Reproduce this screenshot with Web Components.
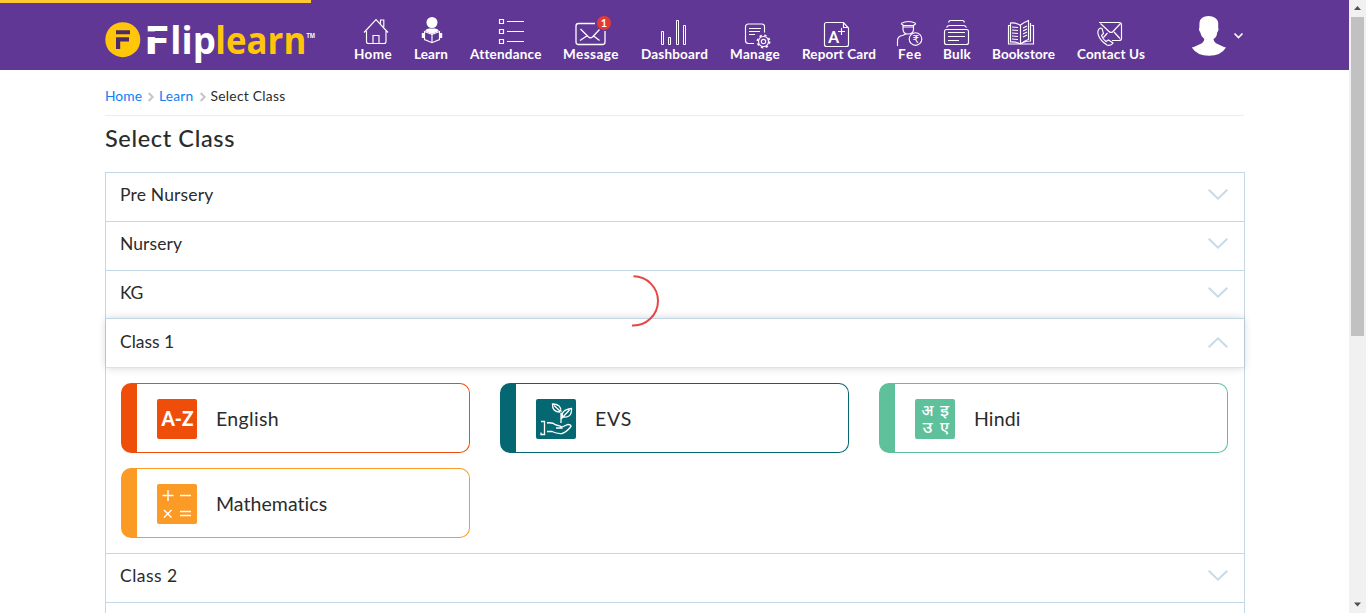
<!DOCTYPE html>
<html lang="en"><head><meta charset="utf-8"><title>Fliplearn</title>
<style>
html,body{margin:0;height:100%;overflow:hidden;background:#fff}
body{font-family:Lato,"Open Sans",sans-serif;color:#2b2b2b}
</style></head><body>
<fl-app></fl-app>
<script>
const make=(name,html,init)=>customElements.define(name,class extends HTMLElement{
  connectedCallback(){ if(this.shadowRoot)return; const r=this.attachShadow({mode:'open'});
    r.innerHTML=typeof html==='function'?html(this):html; if(init)init(this,r); }
});

/* One line of text tracked to a given width */
make('fl-text','<style>:host{display:block;white-space:nowrap}span{display:inline-block}</style><span><slot></slot></span>',(el,r)=>{
  const w=+el.getAttribute('w'), s=r.querySelector('span');
  el.style.width=w+'px';
  s.style.letterSpacing=((w-s.getBoundingClientRect().width)/el.textContent.length)+'px';
});

make('fl-logo',`<style>:host{display:block;width:212px;height:70px}svg{display:block}</style>
<svg width="212" height="70" viewBox="104 0 212 70" font-family="Open Sans" font-weight="700">
<circle cx="122.800" cy="39.7" r="17.500" fill="#ffc60a"/>
<path d="M116 30.3h14v4h-14zM116 37.2h13v4.2h-8.8v7.6H116z" fill="#4b2a6b"/>
<text x="143.500" y="53.700" font-size="39" fill="#fff" textLength="26" lengthAdjust="spacingAndGlyphs">F</text>
<path d="M144 31.4h26v5.600h-26z" fill="#613795"/>
<text x="170.300" y="53.500" font-size="37" fill="#fff" textLength="45.500" lengthAdjust="spacingAndGlyphs">lip</text>
<text x="215.300" y="53.500" font-size="37" fill="#ffc60a" textLength="91" lengthAdjust="spacingAndGlyphs">learn</text>
<text x="306.500" y="37.500" font-size="7" fill="#fff" textLength="8.500" lengthAdjust="spacingAndGlyphs">TM</text>
</svg>`);

/* Icon drawings share the header's coordinate space */
const icons={
home:'<path d="M364 32.500 376 19.500 388 32.500M366.500 31v10.500q0 2 2 2h15.500q2 0 2-2V31M373 43.500v-8h6v8M380.500 23.500v-3.500h3.300v7"/>',
learn:'<circle cx="432" cy="22.500" r="5.500" fill="#fff" stroke="none"/><path d="M425 31q1-2.500 4-2.500h6q3 0 4 2.500l-7 3z" fill="#fff" stroke="none"/><path d="M424.500 31.500 432 34.500l7.500-3v8l-7.500 3.200-7.500-3.200zM432 34.500v8"/><path d="M423.300 33v5M440.700 33v5" stroke-width="3"/>',
attendance:'<path d="M499.500 19.500h4v4h-4zM499.500 29.500h4v4h-4zM499.500 39.500h4v4h-4zM507 21.500h17M507 31.500h17M507 41.500h17"/>',
message:'<path d="M595 23.500h-16.500q-2.500 0-2.500 2.500v16q0 2.500 2.500 2.500h24q2.500 0 2.500-2.500V31M580.500 29l8 8q2 1.500 4 0l7-7.500M580 40.500l7.500-5M599.500 40.500l-6.500-5" stroke-width="1.300"/>',
dashboard:'<path d="M661.500 31.500h2v13h-2zM668.500 37.500h2v7h-2zM676.500 20.500h2v24h-2zM683.500 25.500h2v19h-2z" stroke-width="1"/>',
manage:'<path d="M754 43.500h-5.500q-3 0-3-3v-13.500q0-3 3-3h13.500q2.500 0 2.500 2.500v6M749 28.500h12M749 31.500h11M749 34.500h6"/><circle cx="763.500" cy="41.500" r="2.200"/><circle cx="763.500" cy="41.500" r="5"/><circle cx="763.500" cy="41.500" r="6.200" stroke-dasharray="2.400 2.470" stroke-width="1.500"/>',
report:'<path d="M843.500 22.500h-17q-2 0-2 2v20q0 2 2 2h20q2 0 2-2v-16.500zM843.500 22.500v5h5M841.500 28v7M838 31.500h7"/><text x="828" y="42.500" font-size="17" fill="#fff" stroke="none" font-family="Roboto" font-weight="500">A</text>',
fee:'<path d="M901 23.500q7.500-4 15 0M901 23.500l2.500 2h10l2.500-2M903 25v4q0 5 5 5t5.500-4v-5M903.500 27h10M897.500 46v-5q0-5 5-5.500l3.500-1.500"/><circle cx="915.500" cy="39" r="6.300"/><text x="912.500" y="43" font-size="10.500" fill="#fff" stroke="none" font-family="DejaVu Sans">₹</text>',
bulk:'<rect x="944.500" y="29.500" width="24" height="15" rx="2"/><path d="M946.500 27.500q1-2 3-2h14q2 0 3 2M948.500 22.500q.5-2 2-2h12q1.500 0 2 2M948 32.500h17M948 36.500h17M948 40.500h11"/>',
book:'<path d="M1020.500 25.500q-4-3-10-2.500v19q6-.5 10 2 3-2.500 10-3V23M1020.500 25.500v18.500M1020.500 25q3-2.500 8-4.500v19q-4 1-8 4.500M1010.500 25.500h-2v18.500h25V25.500h-2M1012 27l6 .5M1012 30l6 .5M1012 33l6 .5M1012 36l6 .5M1012 39l6 .5M1023 28l4-2M1023 31l4-2M1023 34l4-2M1023 37l4-2"/>',
contact:'<path d="M1099 22.500h20q2.500 0 2.500 2v14q0 2-2.500 2h-7M1100.500 23.500l8.500 8q2 2 4 0l7.500-8M1114 32l6 6.500M1107.500 33l-4 4.500M1100.500 28q-4 2-2 7.500t8.500 9.500q4 1.500 6-2l-4.500-3-2.500 1.500q-3-2-4.500-6l2-2-1.500-5z"/>'};

make('fl-nav-item',el=>`<style>:host{display:flex;flex-direction:column;padding-top:14px;height:56px;flex:none}
svg{display:block;overflow:visible;fill:none;stroke:#fff;stroke-width:1.150}fl-text{font-size:13.500px;font-weight:700;line-height:16px;color:#fff;margin-top:-2px}
.ic{position:relative}.badge{position:absolute;left:34px;top:2px;width:14px;height:14px;border-radius:50%;background:#e53935;color:#fff;font:700 11px/14px Lato,sans-serif;text-align:center}</style>
<div class="ic"><svg width="${el.getAttribute('w')}" height="34" viewBox="${el.getAttribute('x')} 14 ${el.getAttribute('w')} 34">${icons[el.getAttribute('icon')]}</svg>${el.hasAttribute('badge')?`<div class="badge">${el.getAttribute('badge')}</div>`:''}</div>
<fl-text w="${el.getAttribute('w')}">${el.getAttribute('label')}</fl-text>`);

const nav=[['home','Home',354,38],['learn','Learn',414,34],['attendance','Attendance',470,71],['message','Message',563,56],['dashboard','Dashboard',641,67],['manage','Manage',730,50],['report','Report Card',802,74],['fee','Fee',898,24],['bulk','Bulk',943,28],['book','Bookstore',992,63],['contact','Contact Us',1077,68]];
make('fl-header',`<style>:host{display:block;height:70px;background:#613795}
.row{display:flex;height:70px;padding-left:104px}
nav{display:grid;grid-template-columns:60px 56px 93px 78px 89px 72px 96px 45px 49px 85px 68px;margin-left:38px}
.user{margin-left:45px}
.load{position:absolute;left:0;top:0;width:311px;height:3px;background:#fec931}</style>
<div class="row"><fl-logo></fl-logo><nav>${nav.map(n=>`<fl-nav-item icon="${n[0]}" label="${n[1]}" x="${n[2]}" w="${n[3]}"${n[0]==='message'?' badge="1"':''}></fl-nav-item>`).join('')}</nav>
<svg class="user" width="56" height="70" viewBox="1190 0 56 70"><path d="M1199.500 22.500q1-6.500 9-6.500t9.700 6.500v5.500q1 1.500-1 4.500-.5 5-3.700 6.500.5 3.500 4 5l6.500 3 2 .5q-5 8.300-17 8.300t-17.200-8.300l2-.5 6.500-3q3.500-1.500 4-5-3.200-2-4-6.500-2-3-1-4.500z" fill="#fff"/><path d="m1234.500 33.500 4 4 4-4" fill="none" stroke="#fff" stroke-width="1.600"/></svg></div><div class="load"></div>`);

make('fl-breadcrumb',`<style>:host{display:flex;border-bottom:1px solid #ececee;box-sizing:border-box;height:46px;font-size:13.800px;line-height:20px;padding-top:16px;margin-bottom:10px}
fl-text{color:#0d7ef7;flex:none}fl-text:last-child{color:#2b2b2b}svg{flex:none;margin:6px 5px 0 6px;fill:none;stroke:#c4c4c4;stroke-width:2}</style>
<fl-text w="37">Home</fl-text><svg width="6" height="10"><path d="m.7 1 4 4-4 4"/></svg><fl-text w="34.500">Learn</fl-text><svg width="6" height="10"><path d="m.7 1 4 4-4 4"/></svg><fl-text w="75">Select Class</fl-text>`);

make('fl-class-row',el=>`<style>:host{display:block}.h{position:relative;height:48px;padding:0 16px 0 14px;display:flex;justify-content:space-between;border-top:1px solid #c3d7e4;background:#fff}
fl-text{font-size:17.500px;line-height:44px}svg{display:block;margin-top:15px;fill:none;stroke:#c6dae7;stroke-width:2}
:host([open]) .h{height:48px;border-bottom:1px solid #dbe3e5;margin-top:-1px;box-shadow:0 0 8px rgba(0,0,0,.17);line-height:46px}
:host([open]) svg{transform:scaleY(-1);margin-top:17px}:host([open]) fl-text{line-height:46px}
.p{padding:15px;display:grid;grid-template-columns:repeat(3,349px);gap:15px 30px}</style>
<div class="h">${el.hasAttribute('label')?`<fl-text w="${el.getAttribute('w')}">${el.getAttribute('label')}</fl-text><svg width="20" height="13"><path d="m.7 1.700 9.300 9 9.300-9"/></svg>`:''}</div>${el.hasAttribute('open')?'<div class="p"><slot></slot></div>':''}`);

const subj={
az:'<text x="4.500" y="27" font-family="Lato" font-weight="900" font-size="20" fill="#fff" textLength="32" lengthAdjust="spacingAndGlyphs">A-Z</text>',
math:'<path d="M5.500 11.500h11M11 6v11M23 11.500h11M7 26l7.500 7.500M14.500 26 7 33.500M23 27.500h11M23 31.500h11" fill="none" stroke="#fff" stroke-width="1.400"/>',
evs:'<path d="M25 24V13.500M24 13q-8 0-7.500-8 9 0 8.500 8M18 6.500l6 5.500M26.500 18q-2-7 9-8.500.5 10-9 8.500M33.500 11l-8.500 9M5 22.500h3.500V35.500H5v-2M11 24q5-1 9 2 6 1 6 3H20M26 28l6-2.500q3 0 3 2-5 6-9 7-5 .5-10-2h-5" fill="none" stroke="#fff" stroke-width="1.300"/>',
hindi:'<g fill="#fff" font-family="Noto Sans Devanagari,Noto Sans,FreeSans,sans-serif" font-size="16" font-weight="500"><text x="6.500" y="17" textLength="12" lengthAdjust="spacingAndGlyphs">अ</text><text x="25" y="17" textLength="9" lengthAdjust="spacingAndGlyphs">इ</text><text x="7.500" y="33.500" textLength="10" lengthAdjust="spacingAndGlyphs">उ</text><text x="25" y="33.500" textLength="9" lengthAdjust="spacingAndGlyphs">ए</text></g>'};
make('fl-subject',el=>`<style>:host{box-sizing:border-box;height:70px;border:1px solid ${el.getAttribute('color')};border-left-width:16px;border-radius:10px;display:flex;padding:15px 0 0 20px}
svg{background:${el.getAttribute('color')};border-radius:2px;margin-right:19px}fl-text{font-size:19.500px;line-height:40px}</style>
<svg width="40" height="40">${subj[el.getAttribute('icon')]}</svg><fl-text w="${el.getAttribute('w')}">${el.getAttribute('label')}</fl-text>`);

make('fl-scrollbar',`<style>:host{display:flex;flex-direction:column;width:17px;height:613px;background:#f1f1f1;align-items:center}i{width:13px;height:319px;background:#c1c1c1}svg{height:17px;width:17px}svg+i+svg{margin-top:auto}</style><svg><path d="m5 10 3.500-4 3.500 4z" fill="#505050"/></svg><i></i><svg><path d="m5 6.500 3.500 4 3.500-4z" fill="#505050"/></svg>`);
make('fl-spinner',`<style>:host{position:absolute;left:600px;top:270px}svg{display:block}</style><svg width="64" height="60"><path d="M33.500 6.300A24.700 24.700 0 0 1 58 31A24.700 24.700 0 0 1 32 55.500" fill="none" stroke="#e64545" stroke-width="2"/></svg>`);

make('fl-app',`<style>:host{display:flex;height:613px;overflow:hidden}.page{width:1349px;overflow:hidden}
main{width:1140px;margin-left:105px}h1{margin:-1px 0 0;font-size:23.500px;font-weight:500;line-height:26px;height:47px}
.list{border:solid #c3d7e4;border-width:0 1px}fl-breadcrumb{width:1139px}</style>
<div class="page"><fl-header></fl-header><main><fl-breadcrumb></fl-breadcrumb><h1><fl-text w="130">Select Class</fl-text></h1>
<div class="list"><fl-class-row label="Pre Nursery" w="93.500"></fl-class-row><fl-class-row label="Nursery" w="62"></fl-class-row><fl-class-row label="KG" w="23"></fl-class-row>
<fl-class-row label="Class 1" w="54" open><fl-subject label="English" w="63" color="#ef4e0a" icon="az"></fl-subject><fl-subject label="EVS" w="37" color="#046772" icon="evs"></fl-subject><fl-subject label="Hindi" w="46.500" color="#5fc19c" icon="hindi"></fl-subject><fl-subject label="Mathematics" w="111.500" color="#fb9a24" icon="math"></fl-subject></fl-class-row>
<fl-class-row label="Class 2" w="57.500"></fl-class-row><fl-class-row></fl-class-row></div></main></div><fl-scrollbar></fl-scrollbar><fl-spinner></fl-spinner>`);
</script></body></html>
